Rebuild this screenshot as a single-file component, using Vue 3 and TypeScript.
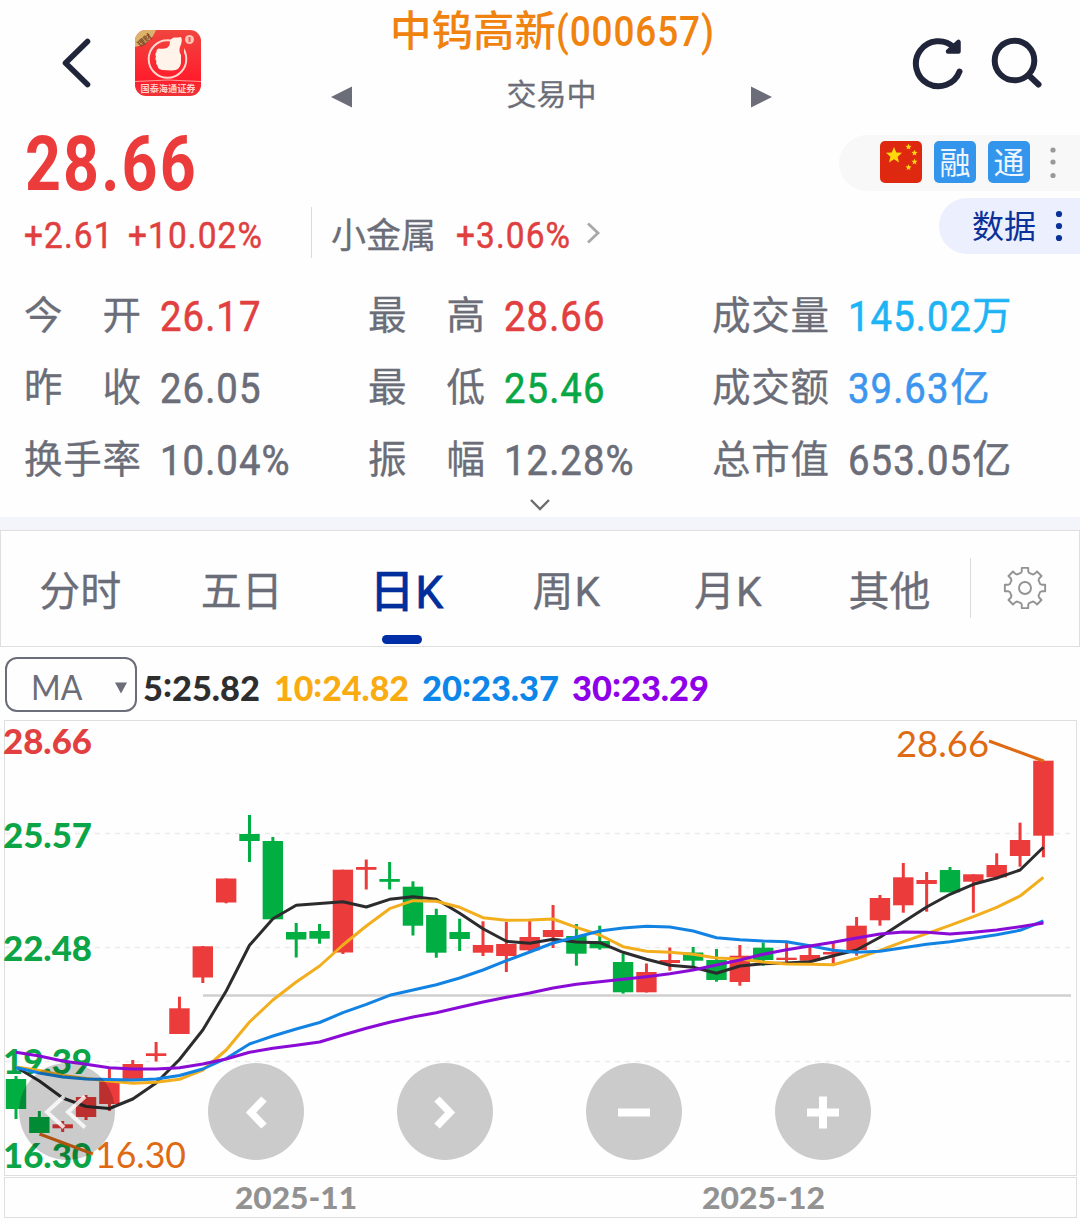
<script setup lang="ts">
type Tone = 'up' | 'down' | 'flat' | 'cyan' | 'sky'

interface Stat {
  label: string
  value: string
  unit?: string
  tone: Tone
}

const stats: Stat[] = [
  { label: '今开', value: '26.17', tone: 'up' },
  { label: '最高', value: '28.66', tone: 'up' },
  { label: '成交量', value: '145.02', unit: '万', tone: 'cyan' },
  { label: '昨收', value: '26.05', tone: 'flat' },
  { label: '最低', value: '25.46', tone: 'down' },
  { label: '成交额', value: '39.63', unit: '亿', tone: 'sky' },
  { label: '换手率', value: '10.04%', tone: 'flat' },
  { label: '振幅', value: '12.28%', tone: 'flat' },
  { label: '总市值', value: '653.05', unit: '亿', tone: 'flat' },
]

const tabs = [
  { han: '分时', latin: '' },
  { han: '五日', latin: '' },
  { han: '日', latin: 'K' },
  { han: '周', latin: 'K' },
  { han: '月', latin: 'K' },
  { han: '其他', latin: '' },
]
const activeTab = 2

const averages = [
  { period: '5', value: '25.82', color: '#2e2e2e', x: 144, w: 115 },
  { period: '10', value: '24.82', color: '#f8ac12', x: 275, w: 133 },
  { period: '20', value: '23.37', color: '#0d86ea', x: 423, w: 135 },
  { period: '30', value: '23.29', color: '#8e00e8', x: 573, w: 135 },
]

const axis = [
  { text: '28.66', y: 753.5, color: '#e23f40' },
  { text: '25.57', y: 847.5, color: '#0ba446' },
  { text: '22.48', y: 960.5, color: '#0ba446' },
  { text: '19.39', y: 1074, color: '#0ba446' },
  { text: '16.30', y: 1168, color: '#0ba446' },
]

const gridLines = [833.5, 947.5, 1061.5]

// high, body top, body bottom, low, rising
type Candle = [number, number, number, number, 0 | 1]
const candles: Candle[] = [
  [1076, 1079, 1109, 1119, 0],
  [1111, 1117, 1133, 1133, 0],
  [1121, 1124.3, 1128.3, 1132, 1],
  [1095, 1097, 1117, 1120, 1],
  [1067, 1081.5, 1104, 1111, 1],
  [1060, 1064, 1080, 1080, 1],
  [1042, 1053.3, 1056, 1061.5, 1],
  [996.7, 1008.3, 1034, 1034, 1],
  [946, 946.3, 977.5, 983, 1],
  [878.5, 878.5, 902.5, 903.3, 1],
  [815, 834, 841, 862, 0],
  [837, 841, 919.3, 919.3, 0],
  [923, 932, 939.5, 957.5, 0],
  [924, 931, 938.7, 943.7, 0],
  [869.7, 869.7, 952.5, 954, 1],
  [859.5, 867, 869.8, 889.5, 1],
  [862, 879, 881.8, 889.5, 0],
  [881.3, 886.7, 925.7, 935.5, 0],
  [908.7, 915, 952.7, 957.7, 0],
  [918.7, 932, 939, 951, 0],
  [921.3, 945, 952.7, 956, 1],
  [922, 944, 956, 972, 1],
  [921, 937, 950.3, 952, 1],
  [905, 930, 937, 948, 1],
  [924, 936, 953.7, 965.7, 0],
  [925.7, 941, 948.3, 949.7, 0],
  [953.7, 962, 992.3, 993.6, 0],
  [963.5, 972, 992.3, 992.5, 1],
  [947.5, 960, 963, 970.7, 1],
  [947, 952.5, 960.7, 966.7, 0],
  [949, 960, 980, 981.7, 0],
  [945, 955.7, 982, 985.7, 1],
  [942.5, 947.7, 960, 965.7, 0],
  [942.5, 957.7, 960, 962, 1],
  [946.7, 955, 960.7, 961, 1],
  [942.5, 952, 954.5, 963.5, 1],
  [917, 925.7, 950, 955.7, 1],
  [895, 898, 920.3, 925.7, 1],
  [863, 877.3, 905.3, 912.7, 1],
  [872, 880, 884, 911.7, 1],
  [867, 870, 892.3, 892.3, 0],
  [874.3, 874.3, 881.7, 912.7, 1],
  [853.3, 865, 877.3, 879.3, 1],
  [822.7, 840, 856, 866.7, 1],
  [760.7, 760.7, 835.7, 857.3, 1],
]

const lines = [
  {
    color: '#2c2c2e',
    ys: [1067, 1081, 1098, 1106.5, 1108.5, 1099, 1083, 1059.5, 1030, 991, 945.3, 918.7, 905.3, 903.5, 901.7, 907, 899.3, 896.7, 899.3, 913.3, 928.7, 941.3, 943.3, 939.3, 942, 942.7, 952.3, 959.3, 965.3, 967.2, 973.3, 966, 963.7, 963, 961.7, 955.7, 950, 937.3, 922, 907, 894.3, 884.3, 878, 870, 847.3],
  },
  {
    color: '#f2ae1c',
    ys: [1067, 1070.5, 1075.5, 1078.5, 1081, 1083.3, 1082.3, 1079.3, 1070, 1050, 1022, 1000, 982, 966, 945, 926, 908.7, 900.7, 901.3, 907.3, 917.7, 920.3, 920, 919, 927.3, 935, 946.7, 951.3, 952.3, 954.2, 958, 959, 962, 964, 964.3, 964.7, 958.3, 950.3, 941.7, 933.7, 925.3, 916.7, 907.3, 896, 877.3],
  },
  {
    color: '#1283e2',
    ys: [1067.5, 1073, 1077, 1079, 1079.5, 1080, 1079, 1075.5, 1069, 1058.5, 1044, 1036, 1029, 1022.5, 1012.7, 1004.3, 995.3, 990, 984.7, 978, 970, 960.7, 952, 943, 937, 931, 928, 926.3, 927, 931, 937.7, 939.7, 941, 941.7, 945.7, 950.3, 952.3, 951.3, 947.7, 944.3, 941.7, 938.3, 934.7, 930.3, 921],
  },
  {
    color: '#8a0bd6',
    ys: [1052.3, 1056, 1061, 1064.3, 1067.7, 1069, 1069, 1067.7, 1064, 1059, 1052.3, 1048.3, 1045.3, 1042, 1035, 1028.3, 1022.3, 1017, 1012.7, 1007.3, 1002, 997.3, 993, 988, 984.3, 981.7, 979.3, 976.7, 973.7, 970, 965, 960, 954.3, 949.7, 946, 942.3, 938, 934, 932, 932.3, 934, 932.3, 930, 926.7, 923],
  },
]

const xAt = (i: number): number => 16 + i * 23.35
const toPoints = (ys: number[]): string => ys.map((y, i) => `${xAt(i).toFixed(1)},${y}`).join(' ')

const controls = [
  { name: 'first', d: 'M-3 -15L-20 0.500L-3 16M18 -15L1 0.500L18 16', w: 4, alpha: 0.8 },
  { name: 'prev', d: 'M8 -12.500L-5 1L8 14.500', w: 7.5, alpha: 1 },
  { name: 'next', d: 'M-8 -12.500L5 1L-8 14.500', w: 7.5, alpha: 1 },
  { name: 'out', d: 'M-16 1H16', w: 8, alpha: 1 },
  { name: 'in', d: 'M-16 1H16M0 -15V17', w: 8, alpha: 1 },
]

const star = (cx: number, cy: number, r: number): string =>
  Array.from({ length: 10 }, (_, i) => {
    const a = (Math.PI / 5) * i - Math.PI / 2
    const q = i % 2 ? r * 0.45 : r
    return `${(cx + q * Math.cos(a)).toFixed(2)},${(cy + q * Math.sin(a)).toFixed(2)}`
  }).join(' ')

const gear = ((): string => {
  const pts: string[] = []
  for (let i = 0; i < 8; i++) {
    const base = (i * 45 * Math.PI) / 180
    for (const [off, r] of [[-15, 15.6], [-11, 17], [-9, 20.4], [9, 20.4], [11, 17], [15, 15.6]]) {
      const a = base + (off * Math.PI) / 180
      pts.push(`${(22 + r * Math.sin(a)).toFixed(2)} ${(22 - r * Math.cos(a)).toFixed(2)}`)
    }
  }
  return `M${pts.join('L')}Z`
})()
</script>

<template>
  <main class="page">
    <header class="top">
      <div class="side left">
        <svg class="back" width="34" height="56" viewBox="0 0 34 56" fill="none">
          <path d="M27.5 6.5L5.500 28L27.5 49.500" stroke="#20253a" stroke-width="5.600" stroke-linecap="round" stroke-linejoin="round" />
        </svg>
        <svg class="logo" width="66" height="66" viewBox="0 0 66 66">
          <defs>
            <linearGradient id="logoBg" x1="0" y1="0" x2="0" y2="1">
              <stop offset="0" stop-color="#f0453f" />
              <stop offset="0.75" stop-color="#ff1d2c" />
              <stop offset="1" stop-color="#ee3436" />
            </linearGradient>
            <clipPath id="logoClip"><rect width="66" height="66" rx="11" /></clipPath>
          </defs>
          <g clip-path="url(#logoClip)">
            <rect width="66" height="66" fill="url(#logoBg)" />
            <path d="M0 0H21Q16 14 0 17Z" fill="#dcb36c" />
            <text x="1" y="14" font-size="8" font-weight="700" fill="#7a4a26" transform="rotate(-40 8 10)">理财</text>
            <circle cx="32.500" cy="29" r="18.800" fill="none" stroke="#ffd9cf" stroke-width="2" />
            <path d="M38 8L49 5V22L40 20Z" fill="#f63a35" />
            <path d="M24 18.500Q32 20 34.500 15Q35 8 39 7.500Q43 7.500 46 7Q48 10 45 17Q43.500 21 46 25V33Q45 40.500 37 40.500L27 40Q22.500 39 22.500 35.500Q20.500 34 21.500 31Q19.500 29 21 26.500Q19.500 24 21.500 22Q21 19 24 18.500Z" fill="#fff3ea" />
            <circle cx="54.500" cy="9.500" r="4.500" fill="#ffc4b8" />
            <path d="M54.500 7V12" stroke="#f0564e" stroke-width="2" />
            <path d="M0 51.500Q33 48.500 66 51.500" stroke="#ff9c98" stroke-width="1" fill="none" />
            <text x="5.500" y="62" font-size="9" font-weight="700" fill="#ffd0cc" textLength="55" lengthAdjust="spacingAndGlyphs">国泰海通证券</text>
          </g>
        </svg>
      </div>
      <div class="center">
        <h1 class="title"><span class="han">中钨高新</span><span class="code">(000657)</span></h1>
        <div class="status">
          <svg width="21" height="22" viewBox="0 0 21 22"><path d="M21 .5V21.500L0 11Z" fill="#6b6d78" /></svg>
          <span>交易中</span>
          <svg width="21" height="22" viewBox="0 0 21 22"><path d="M0 .5V21.500L21 11Z" fill="#6b6d78" /></svg>
        </div>
      </div>
      <div class="side right">
        <svg width="54" height="56" viewBox="0 0 54 56" fill="none" stroke="#20253a" stroke-width="6" stroke-linecap="round">
          <path d="M48.500 36.500A22.500 22.500 0 1 1 43 12.500" />
          <path d="M47.500 7V16.500H37Z" fill="#20253a" stroke-width="4.500" stroke-linejoin="round" />
        </svg>
        <svg width="54" height="56" viewBox="0 0 54 56" fill="none" stroke="#20253a" stroke-width="6" stroke-linecap="round">
          <circle cx="24.500" cy="25.500" r="19.800" /><path d="M39.500 41L48.500 49.500" />
        </svg>
      </div>
    </header>

    <section class="quote">
      <div class="price"><span>28.66</span></div>
      <div class="badges">
        <svg width="42" height="42" viewBox="0 0 42 42">
          <rect width="42" height="42" rx="5" fill="#de2910" />
          <g fill="#ffd90c">
            <polygon :points="star(14, 14.5, 8.5)" />
            <polygon :points="star(28.5, 6, 3.2)" /><polygon :points="star(34.5, 12, 3.2)" />
            <polygon :points="star(34.5, 20.8, 3.2)" /><polygon :points="star(28.5, 26.5, 3.2)" />
          </g>
        </svg>
        <span class="badge">融</span>
        <span class="badge">通</span>
        <svg class="dots" width="6" height="36" viewBox="0 0 6 36" fill="#999">
          <circle cx="3" cy="6" r="2.600" /><circle cx="3" cy="18" r="2.600" /><circle cx="3" cy="31.500" r="2.600" />
        </svg>
      </div>
    </section>

    <section class="change">
      <span class="delta d1"><i>+2.61</i></span>
      <span class="delta d2"><i>+10.02%</i></span>
      <span class="sector">小金属</span>
      <span class="delta d3"><i>+3.06%</i></span>
      <svg class="more" width="15" height="22" viewBox="0 0 15 22" fill="none"><path d="M2 1.500L12 11L2 20.500" stroke="#a9a9ab" stroke-width="2.800" /></svg>
      <div class="data">
        <span>数据</span>
        <svg width="8" height="34" viewBox="0 0 8 34" fill="#0a3099"><circle cx="4" cy="5" r="3.100" /><circle cx="4" cy="17" r="3.100" /><circle cx="4" cy="29" r="3.100" /></svg>
      </div>
    </section>

    <section class="stats">
      <div v-for="s in stats" :key="s.label" class="stat">
        <span class="label"><b v-for="c in s.label" :key="c">{{ c }}</b></span>
        <span class="value" :class="s.tone"><i>{{ s.value }}</i><em v-if="s.unit">{{ s.unit }}</em></span>
      </div>
    </section>
    <div class="expand">
      <svg width="22" height="13" viewBox="0 0 22 13" fill="none"><path d="M2 2L11 11L20 2" stroke="#6c6c6c" stroke-width="2.400" /></svg>
    </div>
    <div class="band"></div>

    <nav class="tabs">
      <div v-for="(t, i) in tabs" :key="t.han" class="tab" :class="{ active: i === activeTab }">
        <span>{{ t.han }}<i v-if="t.latin">{{ t.latin }}</i></span>
      </div>
      <div class="gear">
        <svg width="44" height="44" viewBox="0 0 44 44" fill="none" stroke="#939393" stroke-width="1.900" stroke-linejoin="round">
          <path :d="gear" /><circle cx="22" cy="22" r="6" />
        </svg>
      </div>
    </nav>

    <section class="legend">
      <div class="select"><span>MA</span><svg width="12" height="12" viewBox="0 0 12 12"><path d="M0 .5H12L6 11.500Z" fill="#6b6d78" /></svg></div>
      <svg class="averages" width="600" height="60" viewBox="138 657 600 60">
        <text v-for="a in averages" :key="a.period" :x="a.x - 1" y="700.500" :fill="a.color" :textLength="a.w + 2" lengthAdjust="spacingAndGlyphs">{{ a.period }}<tspan dy="-3.500">:</tspan><tspan dy="3.500">{{ a.value }}</tspan></text>
      </svg>
    </section>

    <section class="chart">
      <svg width="1080" height="502" viewBox="0 720 1080 502">
        <g fill="none" stroke="#dfdfdf">
          <rect x="4.500" y="720.500" width="1072" height="455" />
          <rect x="4.500" y="1177.500" width="1072" height="40" />
        </g>
        <line v-for="y in gridLines" :key="y" x1="5" x2="1071" :y1="y" :y2="y" stroke="#ebebeb" stroke-width="1.300" stroke-dasharray="5 5" />
        <line x1="203" x2="1071" y1="995.500" y2="995.500" stroke="#cfcfcf" stroke-width="2.600" />
        <g class="axis">
          <text v-for="a in axis" :key="a.text" x="3" :y="a.y" :fill="a.color" textLength="89" lengthAdjust="spacingAndGlyphs">{{ a.text }}</text>
        </g>
        <g v-for="(c, i) in candles" :key="i" :fill="c[4] ? '#ec3b3b' : '#00ae42'">
          <rect :x="xAt(i) - 1.5" :y="c[0]" width="3" :height="c[3] - c[0]" />
          <rect :x="xAt(i) - 10.2" :y="c[1]" width="20.400" :height="c[2] - c[1]" />
        </g>
        <g fill="none" stroke-width="3" stroke-linejoin="round">
          <polyline v-for="l in lines" :key="l.color" :points="toPoints(l.ys)" :stroke="l.color" />
          <path d="M989 741L1043.500 761M39.500 1134L93 1154" stroke="#de6a14" />
        </g>
        <g class="mark">
          <text x="896" y="756.500" textLength="93" lengthAdjust="spacingAndGlyphs">28.66</text>
          <text x="95" y="1168" textLength="91" lengthAdjust="spacingAndGlyphs">16.30</text>
        </g>
        <g class="dates">
          <text x="235" y="1209" textLength="122" lengthAdjust="spacingAndGlyphs">2025-11</text>
          <text x="702" y="1209" textLength="123" lengthAdjust="spacingAndGlyphs">2025-12</text>
        </g>
      </svg>
      <div class="controls">
        <svg v-for="c in controls" :key="c.name" width="96" height="97" viewBox="-48 -48.500 96 97">
          <ellipse rx="48" ry="48.500" fill="#000" fill-opacity="0.200" />
          <path :d="c.d" :stroke-width="c.w" stroke="#fff" :stroke-opacity="c.alpha" fill="none" />
        </svg>
      </div>
    </section>
  </main>
</template>

<style>
body {
  margin: 0;
  background: #fff;
}
</style>

<style scoped>
.page {
  width: 1080px;
  height: 1222px;
  overflow: hidden;
  background: #fefefe;
  color: #6b6d78;
  font-family: Roboto, "Noto Sans CJK SC", sans-serif;
  display: flex;
  flex-direction: column;
}
i, em, b {
  font-style: normal;
  font-weight: inherit;
}
svg {
  display: block;
  flex: none;
}
.top {
  height: 126px;
  display: flex;
  flex: none;
}
.side {
  box-sizing: border-box;
  display: flex;
  align-items: flex-start;
}
.left {
  width: 331px;
  padding: 30px 0 0 60px;
}
.back {
  margin-top: 5px;
}
.logo {
  margin-left: 41px;
}
.logo text {
  font-family: "Noto Sans CJK SC", sans-serif;
}
.center {
  width: 441px;
}
.title {
  margin: 0;
  height: 62px;
  line-height: 64px;
  display: flex;
  justify-content: center;
  white-space: nowrap;
  font-size: 42px;
  font-weight: 500;
  color: #f08310;
}
.title .han {
  font-size: 41.5px;
  line-height: 63px;
}
.title .code {
  width: 157px;
  letter-spacing: 1px;
  transform: scaleX(0.88);
  transform-origin: left;
}
.status {
  height: 70px;
  display: flex;
  align-items: center;
  justify-content: space-between;
  font-size: 30px;
}
.status span {
  line-height: 62px;
  margin-bottom: 4px;
  -webkit-text-stroke: 0.3px currentColor;
}
.right {
  width: 308px;
  padding: 35px 36px 0 0;
  justify-content: flex-end;
  gap: 25px;
}
.quote {
  height: 72px;
  flex: none;
  display: flex;
  justify-content: space-between;
}
.price {
  padding-left: 25px;
  font-size: 76px;
  line-height: 76px;
  font-weight: 700;
  color: #ec3b3b;
}
.price span {
  display: inline-block;
  letter-spacing: 2.6px;
  transform: scaleX(0.825);
  transform-origin: left;
}
.badges {
  box-sizing: border-box;
  width: 241px;
  height: 56px;
  margin-top: 9px;
  padding-left: 41px;
  padding-bottom: 2px;
  border-radius: 28px 0 0 28px;
  background: #f8f8f8;
  display: flex;
  align-items: center;
  gap: 12px;
}
.badge {
  width: 42px;
  height: 42px;
  border-radius: 5px;
  background: #3395eb;
  color: #eef6ff;
  font: 400 31px/39px "Noto Sans CJK SC", sans-serif;
  text-align: center;
}
.dots {
  margin-left: 8px;
}
.change {
  height: 82px;
  flex: none;
  display: flex;
  align-items: flex-start;
  padding-left: 24px;
  line-height: 76px;
}
.delta {
  font-size: 36.5px;
  color: #e03f40;
  white-space: nowrap;
  -webkit-text-stroke: 0.5px currentColor;
}
.delta i {
  display: inline-block;
  letter-spacing: 1.2px;
  transform: scaleX(0.915);
  transform-origin: left;
}
.d1 { width: 104px; }
.d2 { width: 203px; }
.sector {
  position: relative;
  width: 125px;
  font-size: 35px;
  line-height: 78px;
  -webkit-text-stroke: 0.3px currentColor;
}
.sector::before {
  content: "";
  position: absolute;
  left: -20px;
  top: 9px;
  width: 1px;
  height: 51px;
  background: #dcdcdc;
}
.d3 { width: 130px; }
.more {
  margin-top: 24px;
}
.data {
  box-sizing: border-box;
  width: 141px;
  height: 56px;
  margin-left: auto;
  padding: 0 17px 0 33px;
  border-radius: 28px 0 0 28px;
  background: #ebeffe;
  display: flex;
  align-items: center;
  justify-content: space-between;
  font-size: 32px;
  line-height: 58px;
  color: #0a3099;
}
.data span {
  padding-top: 1px;
}
.stats {
  flex: none;
  display: grid;
  grid-template-columns: 344px 344px 1fr;
  grid-auto-rows: 72px;
  padding-left: 24px;
}
.stat {
  display: flex;
  align-items: flex-start;
  line-height: 73px;
}
.label {
  width: 117px;
  margin-right: 19px;
  display: flex;
  justify-content: space-between;
  font-size: 38.5px;
  line-height: 71px;
  -webkit-text-stroke: 0.3px currentColor;
}
.value {
  display: flex;
  font-size: 42px;
  white-space: nowrap;
  -webkit-text-stroke: 0.6px currentColor;
}
.value i {
  display: block;
  letter-spacing: 1.2px;
  transform: scaleX(0.91);
  transform-origin: left;
}
.value em {
  font-size: 39px;
  line-height: 72px;
  margin-left: -12px;
}
.value.sky em {
  margin-left: -9px;
}
.up { color: #e23f40; }
.down { color: #08a745; }
.flat { color: #6b6d78; }
.cyan { color: #1db4f5; }
.sky { color: #3d96ee; }
.expand {
  box-sizing: border-box;
  height: 21px;
  padding-top: 2px;
  flex: none;
  display: flex;
  justify-content: center;
  align-items: flex-start;
}
.band {
  height: 13px;
  flex: none;
  background: #f3f5fa;
}
.tabs {
  box-sizing: border-box;
  height: 117px;
  flex: none;
  border: 1px solid #dfdfdf;
  display: flex;
}
.tab {
  width: 161.8px;
  display: flex;
  justify-content: center;
  position: relative;
  line-height: 123px;
  font-size: 41px;
  -webkit-text-stroke: 0.3px currentColor;
}
.tab i {
  margin-left: 1px;
}
.tab:nth-child(-n + 2) span {
  padding-right: 3px;
}
.active {
  color: #002e9c;
  font-size: 45px;
  font-weight: 500;
}
.active span {
  padding-left: 3px;
}
.active i {
  font-size: 44px;
  font-weight: 400;
  -webkit-text-stroke: 0.9px currentColor;
}
.active::after {
  content: "";
  position: absolute;
  left: 58px;
  bottom: 2px;
  width: 40px;
  height: 9px;
  border-radius: 5px;
  background: #002ea6;
}
.gear {
  width: 108px;
  height: 60px;
  margin-top: 27px;
  border-left: 1px solid #dcdcdc;
  display: flex;
  align-items: center;
  justify-content: center;
}
.legend {
  height: 73px;
  flex: none;
  display: flex;
  align-items: flex-start;
}
.select {
  box-sizing: border-box;
  width: 132px;
  height: 55px;
  margin: 10px 1px 0 5px;
  padding: 0 8px 0 24px;
  border: 2px solid #6b6d78;
  border-radius: 12px;
  display: flex;
  align-items: center;
  justify-content: space-between;
  font: 400 34px/51px Lato, sans-serif;
}
.select span {
  padding-top: 4px;
  transform: scaleX(0.94);
  transform-origin: left;
}
.select svg {
  margin-top: 6px;
}
.averages {
  margin-top: 10px;
  font: 900 34px Lato, sans-serif;
}
.chart {
  position: relative;
  height: 502px;
  flex: none;
}
.axis {
  font: 900 34px Lato, sans-serif;
}
.mark {
  font: 400 37.5px Lato, sans-serif;
  fill: #de6a14;
}
.dates {
  font: 900 30px Lato, sans-serif;
  fill: #929292;
}
.controls {
  position: absolute;
  left: 19px;
  top: 343px;
  display: flex;
  gap: 93px;
}
</style>
